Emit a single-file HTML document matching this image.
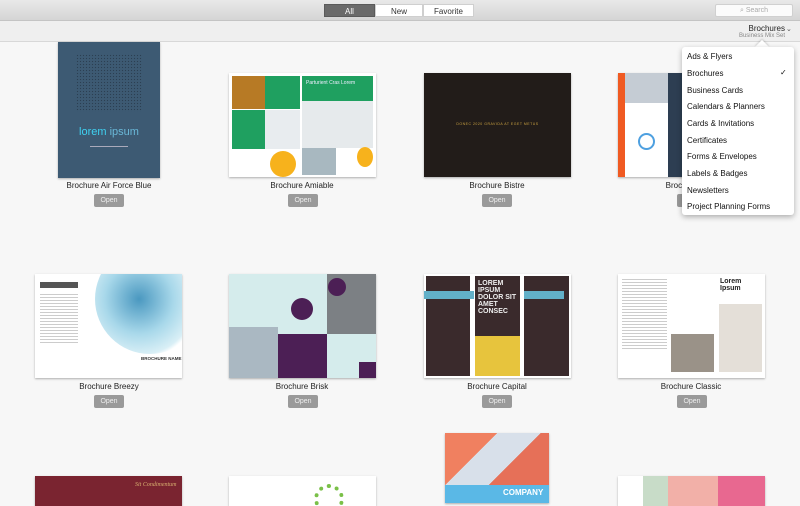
<!DOCTYPE html>
<html><head><meta charset="utf-8"><style>
*{margin:0;padding:0;box-sizing:border-box}
body{width:800px;height:500px;overflow:hidden;background:#f7f7f7;font-family:"Liberation Sans",sans-serif;position:relative}
.a{position:absolute}
.tb{left:0;top:0;width:800px;height:21px;background:linear-gradient(#e9e9e9,#d5d5d5);border-bottom:1px solid #c4c4c4}
.sb{left:0;top:21px;width:800px;height:21px;background:#efefef;border-bottom:1px solid #d8d8d8}
.seg{top:4px;height:13px;font-size:8px;line-height:13px;text-align:center;background:#fff;color:#333;border:1px solid #cfcfcf}
.lbl{font-size:8px;color:#222;text-align:center;width:160px}
.btn{width:30px;height:13px;background:#9a9a9a;color:#eee;font-size:7px;line-height:13px;text-align:center;border-radius:2px}
.th{box-shadow:0 1px 2px rgba(0,0,0,.3);overflow:hidden}
.menu{left:682px;top:47px;width:112px;height:168px;background:#fff;border-radius:3px;box-shadow:0 2px 6px rgba(0,0,0,.3);font-size:8px;color:#111}
.menu div{position:absolute;left:5px}
.tx{background:#ccc;height:1px}
</style></head><body>
<div class="a tb"></div>
<div class="a sb"></div>
<div class="a seg" style="left:324px;width:51px;background:#6a6a6a;color:#fff;border-color:#5a5a5a">All</div>
<div class="a seg" style="left:375px;width:48px">New</div>
<div class="a seg" style="left:423px;width:51px">Favorite</div>
<div class="a" style="left:715px;top:4px;width:78px;height:13px;background:#fbfbfb;border:1px solid #d0d0d0;border-radius:2px;font-size:7px;color:#aaa;line-height:12px;text-align:center">&#x2315; Search</div>
<div class="a" style="left:700px;top:24px;width:85px;text-align:right;font-size:8px;color:#222">Brochures</div>
<div class="a" style="left:700px;top:33px;width:85px;text-align:right;font-size:6px;color:#888">Business Mix Set</div>
<div class="a" style="left:786px;top:25px;font-size:7px;color:#555">&#x2304;</div>

<!-- row1 -->
<div class="a th" style="left:58px;top:42px;width:102px;height:136px;background:#3d5a73">
 <div class="a" style="left:18px;top:12px;width:66px;height:58px;background-image:radial-gradient(#2c3f52 0.7px,transparent 0.8px);background-size:3px 3px"></div>
 <div class="a" style="left:0;top:84px;width:102px;text-align:center;color:#3fd0f0;font-size:11px">lorem <span style="color:#6ab8d8">ipsum</span></div>
 <div class="a tx" style="left:32px;top:104px;width:38px;background:#aab"></div>
</div>
<div class="a th" style="left:229px;top:73px;width:147px;height:104px;background:#fff">
 <div class="a" style="left:3px;top:3px;width:33px;height:33px;background:#b77a25"></div>
 <div class="a" style="left:36px;top:3px;width:35px;height:33px;background:#1fa060"></div>
 <div class="a" style="left:3px;top:37px;width:33px;height:39px;background:#1fa060"></div>
 <div class="a" style="left:36px;top:37px;width:35px;height:39px;background:#e8ecef"></div>
 <div class="a" style="left:73px;top:3px;width:71px;height:25px;background:#1fa060;color:#eef;font-size:5px;padding:4px">Parturient Cras Lorem</div>
 <div class="a" style="left:73px;top:28px;width:71px;height:47px;background:#e6eaec"></div>
 <div class="a" style="left:73px;top:75px;width:34px;height:27px;background:#a8b8c0"></div>
 <div class="a" style="left:41px;top:78px;width:26px;height:26px;border-radius:50%;background:#f7b21c"></div>
 <div class="a" style="left:128px;top:74px;width:16px;height:20px;border-radius:50%;background:#f7b21c"></div>
</div>
<div class="a th" style="left:424px;top:73px;width:147px;height:104px;background:#221c19">
 <div class="a" style="left:0;top:49px;width:147px;text-align:center;font-size:3.5px;letter-spacing:.5px;color:#c9a040">DONEC 2020 GRAVIDA AT EGET METUS</div>
</div>
<div class="a th" style="left:618px;top:73px;width:147px;height:104px;background:#fff">
 <div class="a" style="left:0;top:0;width:7px;height:104px;background:#f05a22"></div>
 <div class="a" style="left:7px;top:0;width:43px;height:30px;background:#c5ccd4"></div>
 <div class="a" style="left:50px;top:0;width:97px;height:104px;background:#2d3e52"></div>
 <div class="a" style="left:20px;top:60px;width:17px;height:17px;border-radius:50%;border:2px solid #4ea0e0"></div>
</div>
<div class="a lbl" style="left:29px;top:181px">Brochure Air Force Blue</div>
<div class="a lbl" style="left:222px;top:181px">Brochure Amiable</div>
<div class="a lbl" style="left:417px;top:181px">Brochure Bistre</div>
<div class="a lbl" style="left:611px;top:181px">Brochure Blue</div>
<div class="a btn" style="left:94px;top:194px">Open</div>
<div class="a btn" style="left:288px;top:194px">Open</div>
<div class="a btn" style="left:482px;top:194px">Open</div>
<div class="a btn" style="left:677px;top:194px">Open</div>

<!-- row2 -->
<div class="a th" style="left:35px;top:274px;width:147px;height:104px;background:#fff">
 <div class="a" style="left:60px;top:-30px;width:110px;height:110px;border-radius:50%;background:radial-gradient(circle at 40% 50%,#4a98c0 0,#a8d8ea 40%,#d9eff6 65%,#fff 70%)"></div>
 <div class="a tx" style="left:5px;top:8px;width:38px;height:6px;background:#555"></div>
 <div class="a tx" style="left:5px;top:20px;width:38px;height:50px;background:repeating-linear-gradient(#ccc 0 1px,transparent 1px 3px)"></div>
 <div class="a" style="left:106px;top:82px;font-size:4.5px;font-weight:bold;color:#333">BROCHURE NAME</div>
</div>
<div class="a th" style="left:229px;top:274px;width:147px;height:104px;background:#d5ecec">
 <div class="a" style="left:0;top:53px;width:49px;height:51px;background:#aab8c2"></div>
 <div class="a" style="left:49px;top:60px;width:49px;height:44px;background:#4c1f55"></div>
 <div class="a" style="left:98px;top:0;width:49px;height:60px;background:#7c8084"></div>
 <div class="a" style="left:99px;top:4px;width:18px;height:18px;border-radius:50%;background:#4c1f55"></div>
 <div class="a" style="left:62px;top:24px;width:22px;height:22px;border-radius:50%;background:#4c1f55"></div>
 <div class="a" style="left:130px;top:88px;width:17px;height:16px;background:#4c1f55"></div>
</div>
<div class="a th" style="left:424px;top:274px;width:147px;height:104px;background:#fff">
 <div class="a" style="left:2px;top:2px;width:44px;height:100px;background:#3a2a2c"></div>
 <div class="a" style="left:51px;top:2px;width:45px;height:60px;background:#3a2a2c"></div>
 <div class="a" style="left:51px;top:62px;width:45px;height:40px;background:#e7c43d"></div>
 <div class="a" style="left:100px;top:2px;width:45px;height:100px;background:#3a2a2c"></div>
 <div class="a" style="left:0;top:17px;width:50px;height:8px;background:#62b0c8"></div>
 <div class="a" style="left:100px;top:17px;width:40px;height:8px;background:#62b0c8"></div>
 <div class="a" style="left:54px;top:6px;width:40px;font-size:7px;line-height:7px;color:#eee;font-weight:bold">LOREM IPSUM DOLOR SIT AMET CONSEC</div>
</div>
<div class="a th" style="left:618px;top:274px;width:147px;height:104px;background:#fff">
 <div class="a tx" style="left:4px;top:5px;width:45px;height:70px;background:repeating-linear-gradient(#ccc 0 1px,transparent 1px 3px)"></div>
 <div class="a" style="left:53px;top:60px;width:43px;height:38px;background:#9a9288"></div>
 <div class="a" style="left:101px;top:30px;width:43px;height:68px;background:#e4dfd8"></div>
 <div class="a" style="left:102px;top:4px;font-size:7px;font-weight:bold;line-height:7px;color:#222">Lorem<br>Ipsum</div>
</div>
<div class="a lbl" style="left:29px;top:382px">Brochure Breezy</div>
<div class="a lbl" style="left:222px;top:382px">Brochure Brisk</div>
<div class="a lbl" style="left:417px;top:382px">Brochure Capital</div>
<div class="a lbl" style="left:611px;top:382px">Brochure Classic</div>
<div class="a btn" style="left:94px;top:395px">Open</div>
<div class="a btn" style="left:288px;top:395px">Open</div>
<div class="a btn" style="left:482px;top:395px">Open</div>
<div class="a btn" style="left:677px;top:395px">Open</div>

<!-- row3 -->
<div class="a th" style="left:35px;top:476px;width:147px;height:30px;background:#7a2430"><div class="a" style="left:100px;top:6px;font-size:6px;font-style:italic;color:#d8b070;font-family:'Liberation Serif',serif">Sit Condimentum</div></div>
<div class="a th" style="left:229px;top:476px;width:147px;height:30px;background:#fff"><div class="a" style="left:85px;top:8px;width:30px;height:30px;border-radius:50%;border:4px dotted #7ac048"></div></div>
<div class="a th" style="left:445px;top:433px;width:104px;height:70px;background:linear-gradient(135deg,#f08060 0 30%,#d8e0ea 30% 55%,#e67058 55%)"><div class="a" style="left:0;top:52px;width:104px;height:20px;background:#5ab8e6"></div><div class="a" style="left:58px;top:55px;font-size:8px;font-weight:bold;color:#fff">COMPANY</div></div>
<div class="a th" style="left:618px;top:476px;width:147px;height:30px;background:#fff"><div class="a" style="left:25px;top:0;width:50px;height:30px;background:#c8dcc8"></div><div class="a" style="left:50px;top:0;width:50px;height:30px;background:#f2b0a8"></div><div class="a" style="left:100px;top:0;width:47px;height:30px;background:#e86890"></div></div>

<!-- menu -->
<div class="a" style="left:757px;top:42px;width:10px;height:10px;background:#fff;transform:rotate(45deg);box-shadow:-1px -1px 2px rgba(0,0,0,.15)"></div>
<div class="a menu">
 <div style="top:5px">Ads &amp; Flyers</div>
 <div style="top:22px">Brochures</div>
 <div style="top:21px;left:98px">&#10003;</div>
 <div style="top:39px">Business Cards</div>
 <div style="top:55px">Calendars &amp; Planners</div>
 <div style="top:72px">Cards &amp; Invitations</div>
 <div style="top:89px">Certificates</div>
 <div style="top:105px">Forms &amp; Envelopes</div>
 <div style="top:122px">Labels &amp; Badges</div>
 <div style="top:139px">Newsletters</div>
 <div style="top:155px">Project Planning Forms</div>
</div>
</body></html>
